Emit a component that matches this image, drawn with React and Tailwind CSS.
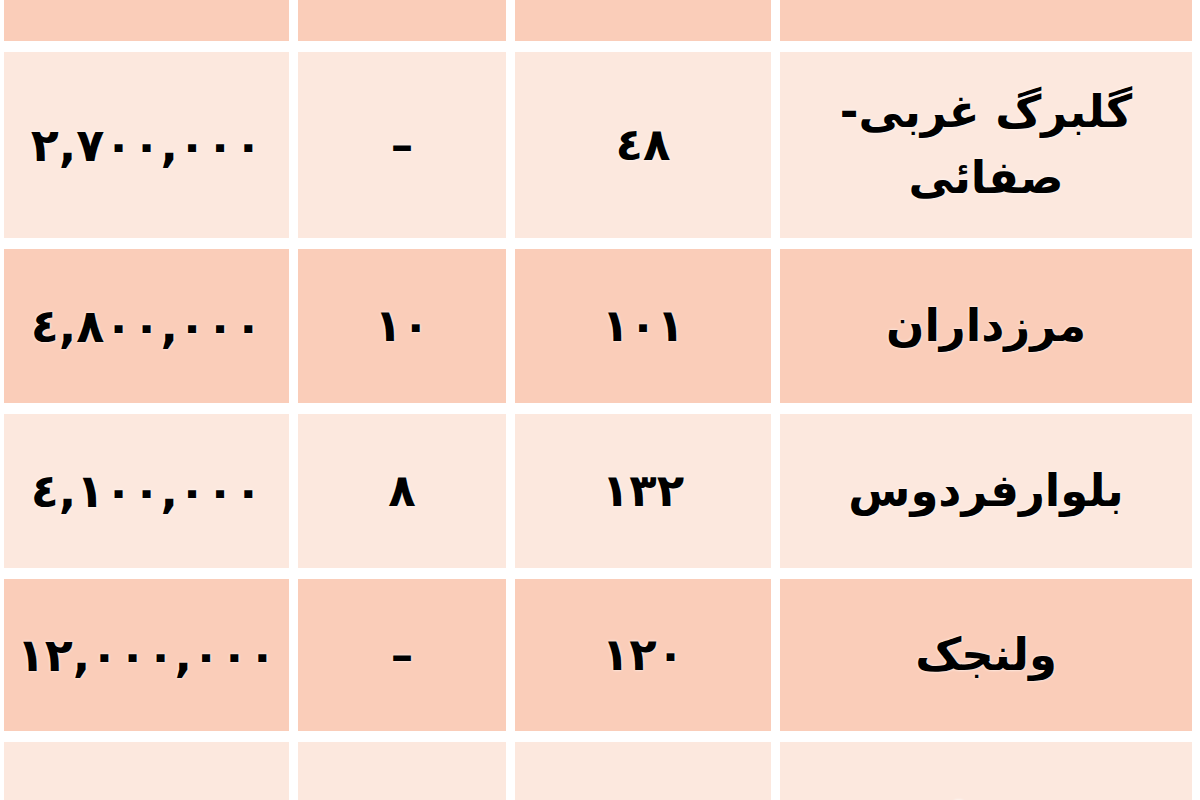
import React from "react";

const dark = "bg-[#facdb9]";
const light = "bg-[#fce8de]";

const rows = [
  { h: "h-[154px]", bg: dark, cells: ["مرزداران", "١٠١", "١٠", "٤,٨٠٠,٠٠٠"] },
  { h: "h-[154px]", bg: light, cells: ["بلوارفردوس", "١٣٢", "٨", "٤,١٠٠,٠٠٠"] },
  { h: "h-[152px]", bg: dark, cells: ["ولنجک", "١٢٠", "–", "١٢,٠٠٠,٠٠٠"] },
  { h: "h-[154px]", bg: light, cells: ["زعفرانیه", "١١٠", "–", "٨,٥٠٠,٠٠٠"] },
];

const cellText =
  "flex items-center justify-center text-center whitespace-pre-line leading-[66px] font-bold text-black [text-shadow:0_0_3px_#ffffff]";

function Row({ bg, h, cells }) {
  return (
    <div className={`grid grid-cols-[412px_256px_208px_285px] gap-x-[9px] ${h}`}>
      {cells.map((c, i) => (
        <div key={i} className={`${bg} ${cellText} ${i === 3 ? "text-[46px]" : "text-[45px]"}`}>
          {c}
        </div>
      ))}
    </div>
  );
}

export default function App() {
  return (
    <div
      dir="rtl"
      className="h-[800px] w-[1200px] overflow-hidden bg-white pr-[8px]"
      style={{ fontFamily: '"DejaVu Sans", sans-serif' }}
    >
      <div className="-mt-[100px] flex flex-col gap-y-[11px]">
        <div className="grid grid-cols-[412px_256px_208px_285px] gap-x-[9px] h-[141px]">
          {["منطقه", "متراژ", "سن بنا", "قیمت هر متر"].map((c, i) => (
            <div key={i} className={`${dark} flex items-end justify-center pb-[36px] text-[44px] font-bold text-black`}>
              {c}
            </div>
          ))}
        </div>
        <div className="grid grid-cols-[412px_256px_208px_285px] gap-x-[9px] h-[186px]">
          {["گلبرگ غربی-\nصفائی", "٤٨", "–", "٢,٧٠٠,٠٠٠"].map((c, i) => (
            <div key={i} className={`${light} ${cellText} ${i === 3 ? "text-[46px]" : "text-[45px]"}`}>
              {c}
            </div>
          ))}
        </div>
        {rows.map((r, i) => (
          <Row key={i} {...r} />
        ))}
      </div>
    </div>
  );
}
